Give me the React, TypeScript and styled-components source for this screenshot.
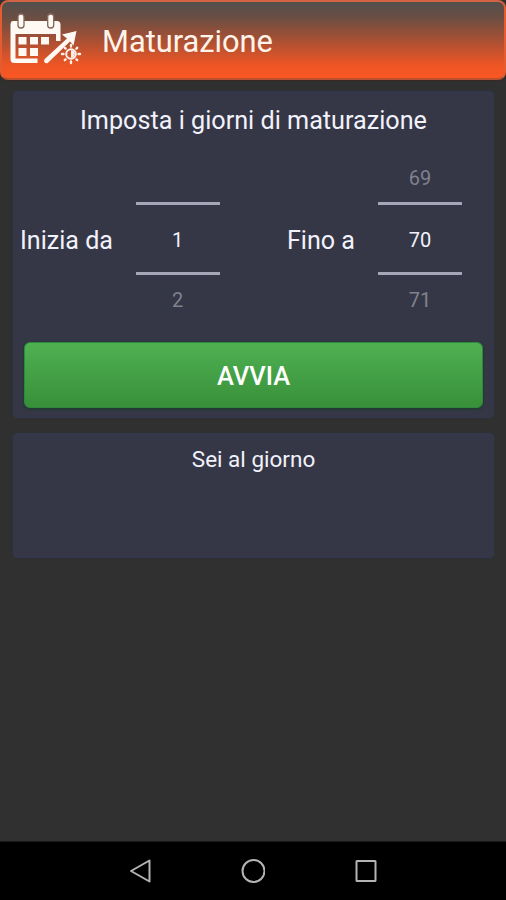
import React from "react";
import styled, { createGlobalStyle } from "styled-components";

const GlobalStyle = createGlobalStyle`
  * { box-sizing: border-box; }
  body {
    margin: 0;
    background: #303030;
    font-family: Roboto, "Liberation Sans", sans-serif;
  }
`;

const Screen = styled.div`
  display: flex;
  flex-direction: column;
  height: 900px;
  background: #303030;
  color: #f1f2fc;
`;

const Header = styled.header`
  display: flex;
  align-items: center;
  height: 80px;
  flex: none;
  padding: 0 0 0 7px;
  border: 2px solid #e65c31;
  border-top-color: #d26345;
  border-bottom-color: #b9512f;
  border-radius: 8px;
  background: linear-gradient(#534f4c, #6a4e43 20%, #a75034 50%, #ec5525 82%, #fb5723);
  box-shadow: 0 1px 1px #3a2723;
`;

const HeaderIcon = styled.svg`
  flex: none;
  width: 74px;
  height: 60px;
`;

const Title = styled.h1`
  margin: 3px 0 0 19px;
  font-size: 30.8px;
  line-height: 38px;
  font-weight: 400;
  color: #fff4eb;
  white-space: nowrap;
`;

const Content = styled.main`
  display: flex;
  flex: 1;
  flex-direction: column;
  gap: 15px;
  padding: 11px 12px 0 13px;
`;

const Card = styled.section<{ $height: number }>`
  display: flex;
  flex-direction: column;
  flex: none;
  height: ${({ $height }) => $height}px;
  border: 1px solid #303951;
  border-radius: 4px;
  background: #363746;
`;

const Caption = styled.h2<{ $size: number; $top: number }>`
  margin: ${({ $top }) => $top}px 0 0;
  font-size: ${({ $size }) => $size}px;
  line-height: 32px;
  font-weight: 400;
  text-align: center;
  white-space: nowrap;
`;

const PickerRow = styled.div`
  display: grid;
  grid-template-columns: 115.5px 84px 67.5px 91px 84px;
  padding-left: 6px;
  margin-top: 27px;
  align-items: center;
`;

const Label = styled.span<{ $column: number }>`
  grid-column: ${({ $column }) => $column};
  font-size: 25.1px;
  line-height: 32px;
  margin-top: 3px;
  white-space: nowrap;
`;

const Picker = styled.div<{ $column: number }>`
  grid-column: ${({ $column }) => $column};
  display: grid;
  grid-template-rows: 38px 73px 40px;
  height: 151px;
  text-align: center;
  font-size: 20px;
  line-height: 24px;
`;

const Value = styled.span<{ $selected?: boolean }>`
  display: flex;
  align-items: ${({ $selected }) => ($selected ? "center" : "flex-start")};
  justify-content: center;
  padding-top: ${({ $selected }) => ($selected ? 2 : 13)}px;
  color: ${({ $selected }) => ($selected ? "#f1f2fc" : "#80818e")};
  border: solid #a5a6b7;
  border-width: ${({ $selected }) => ($selected ? "3px 0" : "0")};

  &:first-child { padding-top: 2px; }
`;

const StartButton = styled.button`
  height: 66px;
  margin: 27px 10px 0;
  padding: 2px 0 0;
  border: 1px solid #30883b;
  border-radius: 6px;
  background: linear-gradient(#4fb052, #389039);
  box-shadow: 0 1px 2px 1px #213b33;
  color: #fff;
  font: 500 25.5px/30px Roboto, sans-serif;
`;

const NavBar = styled.nav`
  display: flex;
  justify-content: center;
  align-items: center;
  gap: 88px;
  height: 59px;
  flex: none;
  padding-bottom: 1px;
  background: #000;
  border-top: 1px solid #181818;
`;

const NavIcon = styled.svg`
  width: 24px;
  height: 24px;
  fill: none;
  stroke: #b4b4b4;
  stroke-width: 2;
`;

const CalendarIcon = () => (
  <HeaderIcon viewBox="9 10 74 60">
    <g fill="#fff9f3">
      <path d="M13 21H57Q60.5 21 60.5 25V41H56V34H15.5V58.5H37.5V63H14Q10.5 63 10.5 59V25Q10.5 21 13 21Z" />
      <rect x="18.5" y="37" width="8" height="7.5" />
      <rect x="30" y="37" width="8" height="7.5" />
      <rect x="41" y="37" width="8" height="7.5" />
      <rect x="18.5" y="48" width="8" height="8" />
      <rect x="30" y="48" width="8" height="8" />
      <path d="M44.5 59.2 67 38.5 62 34.5 76.5 31 73.5 45.5 70 41.5 48 62.8Q46 64 44.6 62.5 43.5 61 44.5 59.2Z" />
    </g>
    <g fill="#fff9f3" stroke="#80685c" strokeWidth="1.3">
      <rect x="18" y="14" width="6" height="14" rx="2.8" />
      <rect x="47.7" y="14" width="6" height="14" rx="2.8" />
    </g>
    <circle cx="71" cy="54" r="4.8" fill="none" stroke="#fff3e9" strokeWidth="2" />
    <path d="M71 50.3a3.7 3.7 0 0 1 0 7.4Z" fill="#fff3e9" />
    <path
      d="M71 45v1.5M71 61.5V63M62 54h1.5M78.5 54H80M64.8 47.8l.8.8M76.4 59.4l.8.8M64.8 60.2l.8-.8M76.4 48.6l.8-.8"
      stroke="#fff0e5"
      strokeWidth="2.4"
      strokeLinecap="round"
    />
  </HeaderIcon>
);

interface NumberPickerProps {
  column: number;
  previous?: number;
  value: number;
  next: number;
}

const NumberPicker = ({ column, previous, value, next }: NumberPickerProps) => (
  <Picker $column={column}>
    <Value>{previous}</Value>
    <Value $selected>{value}</Value>
    <Value>{next}</Value>
  </Picker>
);

export default function App() {
  return (
    <>
      <GlobalStyle />
      <Screen>
        <Header>
          <CalendarIcon />
          <Title>Maturazione</Title>
        </Header>
        <Content>
          <Card $height={327}>
            <Caption $size={25.2} $top={13}>Imposta i giorni di maturazione</Caption>
            <PickerRow>
              <Label $column={1}>Inizia da</Label>
              <NumberPicker column={2} value={1} next={2} />
              <Label $column={4}>Fino a</Label>
              <NumberPicker column={5} previous={69} value={70} next={71} />
            </PickerRow>
            <StartButton>AVVIA</StartButton>
          </Card>
          <Card $height={125}>
            <Caption $size={22.5} $top={9}>Sei al giorno</Caption>
          </Card>
        </Content>
        <NavBar>
          <NavIcon viewBox="0 0 24 24"><path d="M2 12 20.5 1.5V22.5Z" strokeLinejoin="round" /></NavIcon>
          <NavIcon viewBox="-0.5 0 24 24"><circle cx="12" cy="12" r="11" /></NavIcon>
          <NavIcon viewBox="0 0 24 24"><rect x="3.5" y="2" width="19" height="20" rx="0.5" /></NavIcon>
        </NavBar>
      </Screen>
    </>
  );
}
